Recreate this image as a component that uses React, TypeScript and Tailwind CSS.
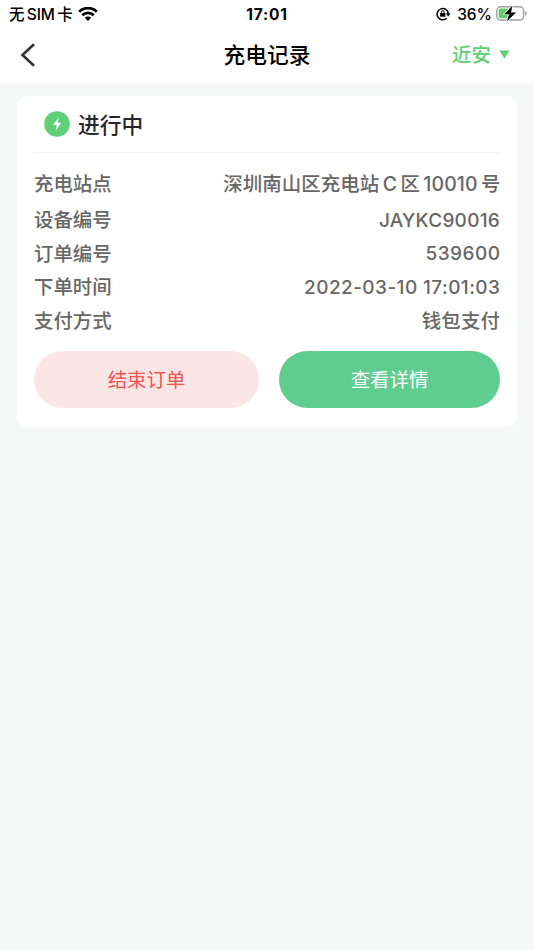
import React from 'react';

interface RecordRow {
    label: string;
    value: string;
    valueClass: string;
    rowClass: string;
}

const rows: RecordRow[] = [
    { label: '充电站点', value: '深圳南山区充电站 C 区 10010 号', valueClass: 'tracking-[0.12px] [word-spacing:-1.9px] -mr-[0.5px]', rowClass: 'h-[38px]' },
    { label: '设备编号', value: 'JAYKC90016', valueClass: 'text-[19px] tracking-[0.25px]', rowClass: 'h-[33.5px]' },
    { label: '订单编号', value: '539600', valueClass: 'text-[19px] tracking-[0.45px] -mr-[0.4px]', rowClass: 'h-[33.5px]' },
    { label: '下单时间', value: '2022-03-10 17:01:03', valueClass: 'text-[19px] tracking-[0.42px] -mr-[0.4px]', rowClass: 'h-[33.5px]' },
    { label: '支付方式', value: '钱包支付', valueClass: 'tracking-[0.15px]', rowClass: 'h-[33.5px]' }
];

const WifiIcon = () => (
    <svg width="20" height="15" viewBox="0 0 20 15" fill="none" stroke="#000" strokeWidth="2.8">
        <path d="M1.2 4.7a12.6 12.6 0 0 1 17.6 0" />
        <path d="M4.3 8.2a8.1 8.1 0 0 1 11.4 0" />
        <path d="M6.8 10.7a4.6 4.6 0 0 1 6.4 0L10 14z" fill="#000" stroke="none" />
    </svg>
);

const RotationLockIcon = () => (
    <svg width="15" height="14" viewBox="0 0 15 14" fill="none" stroke="#000" strokeWidth="1.5">
        <path d="M10.6 11.2A5.6 5.6 0 1 1 12.3 6.6" />
        <path d="M9.8 6.2h4.8l-2.4 3.2z" fill="#000" stroke="none" />
        <rect x="4.1" y="6" width="5.3" height="3.8" rx="0.5" fill="#000" stroke="none" />
        <path d="M5.4 6.4V5.1a1.4 1.4 0 0 1 2.8 0v1.3" strokeWidth="1" />
    </svg>
);

const BatteryIcon = () => (
    <svg width="32" height="18" viewBox="0 0 32 18" fill="none">
        <rect x="0.8" y="1.8" width="26.8" height="13.2" rx="3.8" stroke="#a0a0a0" strokeWidth="1.4" />
        <path d="M4.6 3.5h6.9v9.8H4.6a2 2 0 0 1-2-2V5.5a2 2 0 0 1 2-2z" fill="#62cb70" />
        <path d="M29.2 6.1v4.6c1-.4 1.6-1.3 1.6-2.3s-.6-1.9-1.6-2.3z" fill="#a0a0a0" />
        <path d="M16.4 0.7 8.2 9.2H13L11 16.3 20 7.4h-5z" fill="#000" stroke="#fff" strokeWidth="1.2" paintOrder="stroke" />
    </svg>
);

const StatusBar = () => (
    <div className="grid h-7 grid-cols-3 items-center pl-[9px] pr-[6px] text-[15.5px] font-medium text-black">
        <div className="flex items-center gap-[5px]">
            <span className="whitespace-nowrap pt-px [word-spacing:-2px]">无 SIM 卡</span>
            <WifiIcon />
        </div>
        <span className="pt-px pr-[3px] text-center font-bold tracking-[0.8px]">17:01</span>
        <div className="flex items-center justify-end">
            <RotationLockIcon />
            <span className="ml-[6px] mr-[4px] pt-px">36%</span>
            <BatteryIcon />
        </div>
    </div>
);

const NavBar = () => (
    <div className="grid h-[55px] grid-cols-3 items-center px-6">
        <button aria-label="返回" className="-ml-1 pb-[2px]">
            <svg width="16" height="24" viewBox="0 0 16 24" fill="none" stroke="#333" strokeWidth="2.6">
                <path d="M14 1.3 2.5 12 14 22.7" />
            </svg>
        </button>
        <h1 className="text-center text-[21.7px] font-medium text-black">充电记录</h1>
        <button className="flex items-center justify-end gap-[8px] text-[19.5px] font-medium text-[#5fd072]">
            近安
            <svg width="11" height="9" viewBox="0 0 11 9" fill="#5fd072" className="-mt-[2px]">
                <path d="M0.3 0.5h10.4L5.5 8.5z" />
            </svg>
        </button>
    </div>
);

const OrderCard = () => (
    <div className="mx-[17px] mt-[13px] h-[331px] rounded-[10px] bg-white px-[17px]">
        <div className="flex h-[57px] items-center gap-[8px] border-b border-[#f4f5f5] pl-[10px]">
            <svg width="26" height="26" viewBox="0 0 26 26">
                <circle cx="13" cy="13" r="12.8" fill="#5fd077" />
                <path d="M14.6 6.5 9 14h3.6l-.9 5.8 5.5-8.1h-3.5z" fill="#fff" />
            </svg>
            <span className="pt-[2px] text-[21.7px] font-medium text-[#262626]">进行中</span>
        </div>
        <div className="pt-[13px] text-[19.4px] font-medium text-[#666]">
            {rows.map((row) => (
                <div key={row.label} className={`flex items-center justify-between ${row.rowClass}`}>
                    <span>{row.label}</span>
                    <span className={row.valueClass}>{row.value}</span>
                </div>
            ))}
        </div>
        <div className="mt-[13px] flex h-[57px] gap-[20px] text-[19.4px]">
            <button className="w-[225px] rounded-full bg-[#fbe6e5] pt-[2px] text-[#f0524f]">结束订单</button>
            <button className="flex-1 rounded-full bg-[#5fcd90] pt-[2px] text-white">查看详情</button>
        </div>
    </div>
);

export default function App() {
    return (
        <div className="flex min-h-[950px] flex-col bg-[#f6f8f8] font-['Inter','Noto_Sans_CJK_SC',sans-serif]">
            <header className="bg-white">
                <StatusBar />
                <NavBar />
            </header>
            <main className="flex-1">
                <OrderCard />
            </main>
        </div>
    );
}
